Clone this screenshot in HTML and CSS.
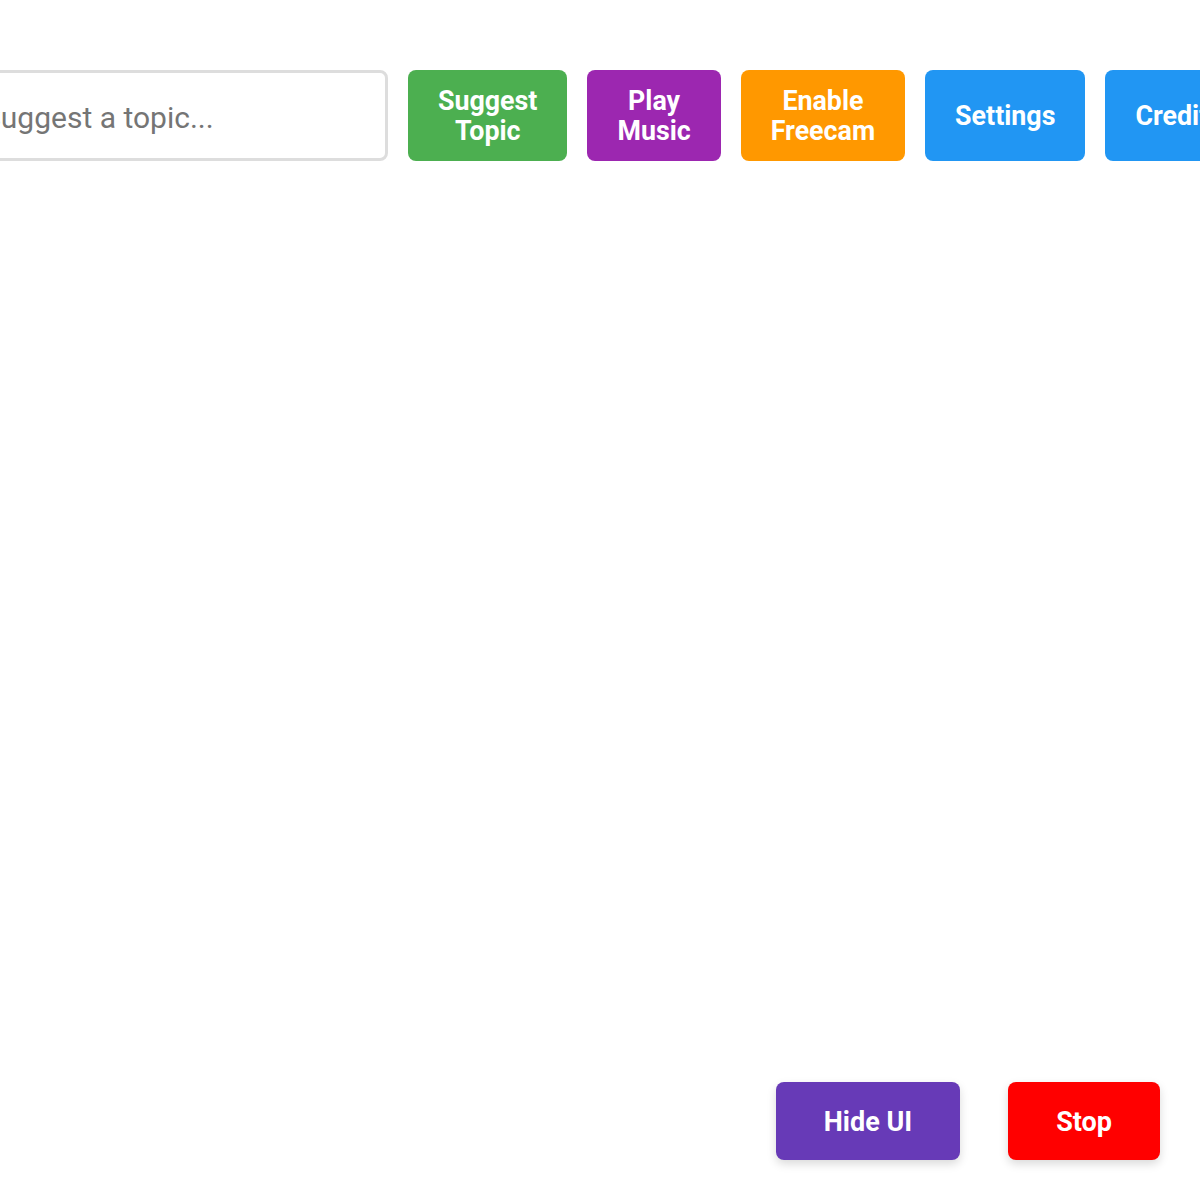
FILE: index.html
```html
<!DOCTYPE html>
<html>
<head>
<meta charset="utf-8">
<link rel="stylesheet" href="styles.css">
</head>
<body>
<div class="page">
  <div class="topbar">
    <input class="topic-input" type="text" placeholder="Suggest a topic...">
    <button class="btn green">Suggest Topic</button>
    <button class="btn purple">Play Music</button>
    <button class="btn orange">Enable Freecam</button>
    <button class="btn blue">Settings</button>
    <button class="btn blue">Credits</button>
  </div>
  <div class="spacer"></div>
  <div class="bottombar">
    <button class="btn2 deep">Hide UI</button>
    <button class="btn2 red">Stop</button>
  </div>
</div>
</body>
</html>
```
FILE: styles.css
```css
html, body {
  margin: 0;
  padding: 0;
  background: #fff;
  overflow: hidden;
}
.page {
  width: 1200px;
  height: 1200px;
  display: flex;
  flex-direction: column;
  font-family: Roboto, "Liberation Sans", sans-serif;
}
.topbar {
  margin-top: 70px;
  width: 1200px;
  height: 91px;
  display: flex;
  justify-content: center;
  align-items: stretch;
  gap: 20px;
}
.topic-input {
  flex: 0 0 auto;
  width: 440px;
  height: 91px;
  box-sizing: border-box;
  border: 3px solid #ddd;
  border-radius: 8px;
  padding: 4px 30px 0 32px;
  font-family: Roboto, "Liberation Sans", sans-serif;
  font-size: 30px;
  color: #333;
  outline: none;
}
.topic-input::placeholder {
  color: #757575;
}
.btn {
  flex: 0 0 auto;
  width: min-content;
  border: none;
  border-radius: 8px;
  padding: 1px 30px 0 30px;
  color: #fff;
  font-family: Roboto, "Liberation Sans", sans-serif;
  font-weight: 700;
  font-size: 26.8px;
  line-height: 30px;
  text-align: center;
}
.green { background: #4CAF50; }
.purple { background: #9C27B0; }
.orange { background: #FF9800; }
.blue { background: #2196F3; white-space: nowrap; }
.spacer { flex: 1; }
.bottombar {
  display: flex;
  justify-content: flex-end;
  gap: 48px;
  padding: 0 40px 40px 0;
}
.btn2 {
  border: none;
  border-radius: 8px;
  height: 78px;
  padding: 2px 48px 0 48px;
  color: #fff;
  font-family: Roboto, "Liberation Sans", sans-serif;
  font-weight: 700;
  font-size: 27px;
  box-shadow: 0 4px 10px rgba(0,0,0,0.15);
}
.deep { background: #673AB7; }
.red { background: #FF0000; }
```
